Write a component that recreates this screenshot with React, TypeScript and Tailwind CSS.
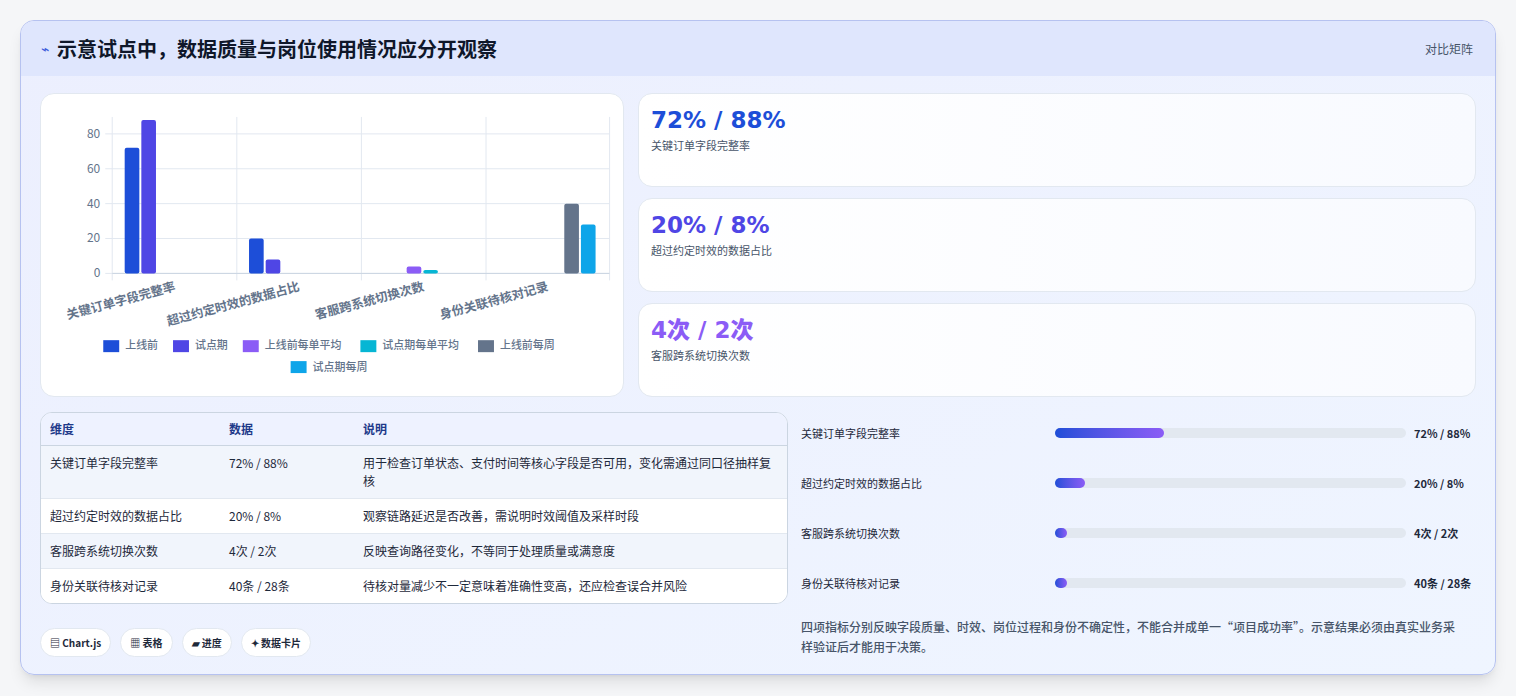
import React from "react";

const F = { fontFamily: '"Noto Sans CJK SC","Noto Sans",sans-serif' };

function Chart() {
  const y = (v: number) => 273 - v * 1.75;
  const slot = 16.7;
  const bars: [number, number, number, string][] = [
    [0, 0, 72, "#1d4ed8"], [0, 1, 88, "#4f46e5"],
    [1, 0, 20, "#1d4ed8"], [1, 1, 8, "#4f46e5"],
    [2, 2, 4, "#8b5cf6"], [2, 3, 2, "#06b6d4"],
    [3, 4, 40, "#64748b"], [3, 5, 28, "#0ea5e9"],
  ];
  const labels = ["关键订单字段完整率", "超过约定时效的数据占比", "客服跨系统切换次数", "身份关联待核对记录"];
  const legend1: [string, string, number][] = [
    ["上线前", "#1d4ed8", 102], ["试点期", "#4f46e5", 172], ["上线前每单平均", "#8b5cf6", 242],
    ["试点期每单平均", "#06b6d4", 360], ["上线前每周", "#64748b", 478],
  ];
  return (
    <svg viewBox="40 93 583 303" className="w-full h-full" style={F}>
      {[0, 20, 40, 60, 80].map((v) => (
        <g key={v}>
          <line x1={104} x2={610} y1={y(v)} y2={y(v)} stroke="#e2e8f0" />
          <text x={99} y={y(v) + 4} fontSize={12} fill="#64748b" textAnchor="end">{v}</text>
        </g>
      ))}
      {[111, 236, 361, 486, 610].map((x) => (
        <line key={x} x1={x} x2={x} y1={116} y2={280} stroke="#e2e8f0" />
      ))}
      <line x1={111} x2={610} y1={273} y2={273} stroke="#cbd5e1" />
      {bars.map(([c, s, v, col], i) => {
        const x = 111 + c * 124.75 + 12.5 + s * slot;
        return <rect key={i} x={x} y={y(v)} width={slot - 2} height={v * 1.75} rx={2} fill={col} />;
      })}
      {labels.map((l, i) => {
        const cx = 111 + i * 124.75 + 64;
        return (
          <text key={l} x={cx} y={290} fontSize={12.5} fontWeight={700} fill="#64748b" textAnchor="end" transform={`rotate(-15 ${cx} 290)`}>{l}</text>
        );
      })}
      {legend1.map(([t, c, x]) => (
        <g key={t}>
          <rect x={x} y={340} width={16} height={12} fill={c} />
          <text x={x + 22} y={349} fontSize={11} fontWeight={500} fill="#64748b">{t}</text>
        </g>
      ))}
      <rect x={290} y={361} width={16} height={12} fill="#0ea5e9" />
      <text x={312} y={371} fontSize={11} fontWeight={500} fill="#64748b">试点期每周</text>
    </svg>
  );
}

const rows = [
  ["关键订单字段完整率", "72% / 88%", "用于检查订单状态、支付时间等核心字段是否可用，变化需通过同口径抽样复核"],
  ["超过约定时效的数据占比", "20% / 8%", "观察链路延迟是否改善，需说明时效阈值及采样时段"],
  ["客服跨系统切换次数", "4次 / 2次", "反映查询路径变化，不等同于处理质量或满意度"],
  ["身份关联待核对记录", "40条 / 28条", "待核对量减少不一定意味着准确性变高，还应检查误合并风险"],
];

const prog: [string, string, string][] = [
  ["关键订单字段完整率", "72% / 88%", "31%"],
  ["超过约定时效的数据占比", "20% / 8%", "8.5%"],
  ["客服跨系统切换次数", "4次 / 2次", "3.3%"],
  ["身份关联待核对记录", "40条 / 28条", "3.3%"],
];

export default function App() {
  return (
    <div className="w-[1516px] h-[696px] bg-[#f5f6f8] pt-[20px] pl-[20px]" style={F}>
      <div className="w-[1476px] h-[655px] rounded-[14px] border border-[#b6c2f0] bg-gradient-to-br from-[#eceffe] to-[#eff5ff] overflow-hidden shadow-lg">
        <div className="h-[55px] bg-[#dfe6fd] flex items-center justify-between px-[20px]">
          <div className="flex items-center gap-[8px]">
            <span className="text-[#3b5bdb] text-[14px]">⌁</span>
            <span className="text-[20px] font-bold text-[#0f172a]">示意试点中，数据质量与岗位使用情况应分开观察</span>
          </div>
          <span className="text-[12px] text-[#475569] mr-[2px]">对比矩阵</span>
        </div>
        <div className="px-[19px] pt-[17px]">
          <div className="flex gap-[14px]">
            <div className="w-[584px] h-[304px] bg-white rounded-[14px] border border-[#e2e8f0]">
              <Chart />
            </div>
            <div className="flex-1 flex flex-col gap-[11px]">
              {[
                ["72% / 88%", "关键订单字段完整率", "text-[#1d4ed8]"],
                ["20% / 8%", "超过约定时效的数据占比", "text-[#4f46e5]"],
                ["4次 / 2次", "客服跨系统切换次数", "text-[#8b5cf6]"],
              ].map(([n, l, c]) => (
                <div key={l} className="h-[94px] rounded-[14px] border border-[#e2e8f0] bg-gradient-to-r from-white to-[#f8faff] px-[12px] pt-[10px]">
                  <div className={`text-[23px] font-extrabold leading-[32px] ${c}`} style={{ fontFamily: '"DejaVu Sans","Noto Sans CJK SC",sans-serif' }}>{n}</div>
                  <div className="text-[11px] text-[#475569] mt-[1px]">{l}</div>
                </div>
              ))}
            </div>
          </div>
          <div className="flex gap-[12px] mt-[15px]">
            <div className="w-[748px]">
              <div className="rounded-[12px] border border-[#cbd5e1] overflow-hidden bg-white text-[12px]">
                <div className="flex h-[33px] items-center bg-[#eef2ff] text-[#1e3a8a] font-bold border-b border-[#cbd5e1]">
                  <div className="w-[188px] pl-[9px]">维度</div>
                  <div className="w-[134px]">数据</div>
                  <div className="flex-1">说明</div>
                </div>
                {rows.map((r, i) => (
                  <div key={i} className={`flex py-[8px] leading-[18px] text-[#1e293b] ${i % 2 === 0 ? "bg-[#f1f5fc]" : "bg-white"} ${i < 3 ? "border-b border-[#e2e8f0]" : ""}`}>
                    <div className="w-[188px] pl-[9px]">{r[0]}</div>
                    <div className="w-[134px]">{r[1]}</div>
                    <div className="flex-1 pr-[6px]">{r[2]}</div>
                  </div>
                ))}
              </div>
              <div className="flex gap-[9px] mt-[24px] text-[10px] text-[#1e293b] font-bold">
                {["▤ Chart.js", "▦ 表格", "▰ 进度", "✦ 数据卡片"].map((t) => (
                  <span key={t} className="h-[29px] px-[9px] flex items-center rounded-full bg-white border border-[#e2e8f0]">{t}</span>
                ))}
              </div>
            </div>
            <div className="flex-1 pl-[1px]">
              <div className="flex flex-col gap-[40px] pt-[16px]">
                {prog.map(([l, v, w]) => (
                  <div key={l} className="flex items-center h-[10px] text-[11px]">
                    <div className="w-[254px] text-[#1e293b]">{l}</div>
                    <div className="w-[351px] h-[10px] rounded-full bg-[#e2e8f0]">
                      <div className="h-full min-w-[11px] rounded-full bg-gradient-to-r from-[#1d4ed8] to-[#8b5cf6]" style={{ width: w }} />
                    </div>
                    <div className="ml-[8px] font-bold text-[#1e293b]">{v}</div>
                  </div>
                ))}
              </div>
              <p className="mt-[29px] pr-[16px] text-[12px] leading-[20px] text-[#475569] font-medium">
                四项指标分别反映字段质量、时效、岗位过程和身份不确定性，不能合并成单一“项目成功率”。示意结果必须由真实业务采样验证后才能用于决策。
              </p>
            </div>
          </div>
        </div>
      </div>
    </div>
  );
}
